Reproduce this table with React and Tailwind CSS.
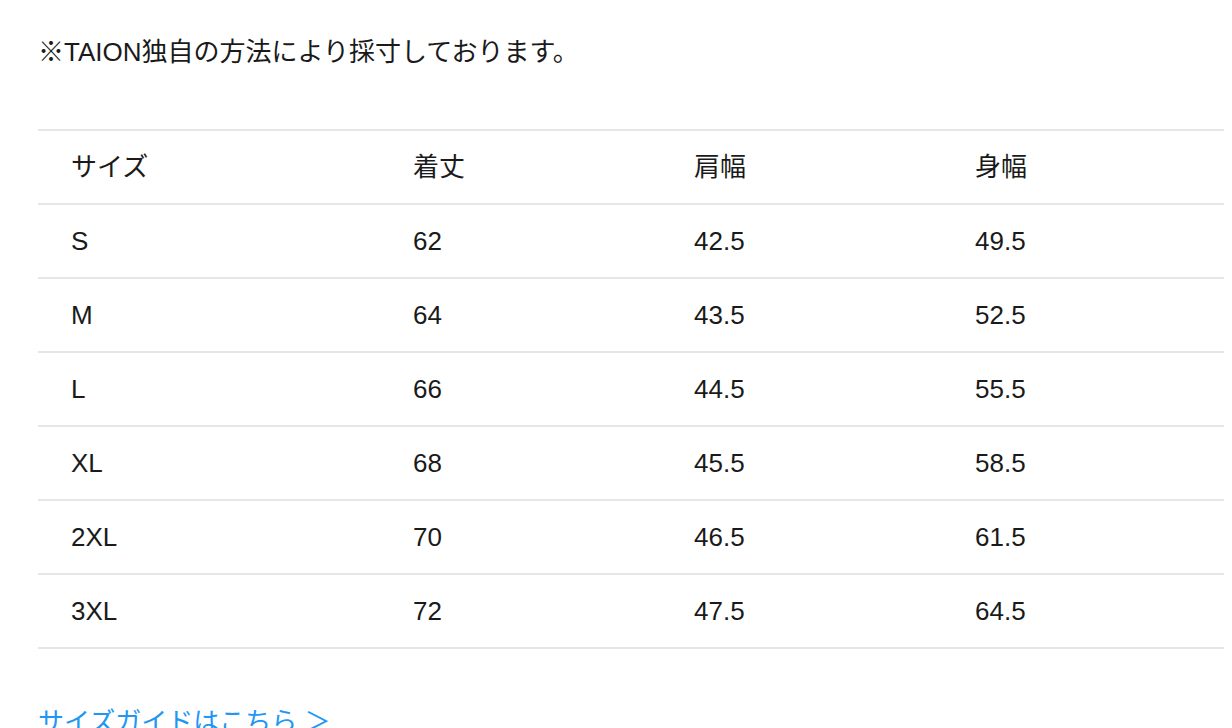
import React from "react";

const rows = [
  ["S", "62", "42.5", "49.5"],
  ["M", "64", "43.5", "52.5"],
  ["L", "66", "44.5", "55.5"],
  ["XL", "68", "45.5", "58.5"],
  ["2XL", "70", "46.5", "61.5"],
  ["3XL", "72", "47.5", "64.5"],
];

function Row({ cells }) {
  return (
    <div className="grid grid-cols-[342px_281px_281px_1fr] h-[74px] items-center border-t-2 border-[#e6e6e6]">
      {cells.map((c, i) => (
        <div key={i} className="pl-[33px]">{c}</div>
      ))}
    </div>
  );
}

export default function App() {
  return (
    <div
      className="w-[1232px] h-[728px] overflow-hidden bg-white text-[#1a1a1a] pl-[38px] pr-[8px] pt-[35px] text-[26px]"
      style={{ fontFamily: '"Liberation Sans", "Noto Sans CJK JP", sans-serif' }}
    >
      <div className="leading-[34px]">※TAION独自の方法により採寸しております。</div>
      <div className="mt-[60px] border-b-2 border-[#e6e6e6]">
        <Row cells={["サイズ", "着丈", "肩幅", "身幅"]} />
        {rows.map((r) => (
          <Row key={r[0]} cells={r} />
        ))}
      </div>
      <div className="mt-[56px] text-[#2196f3] leading-[34px]">サイズガイドはこちら ＞</div>
    </div>
  );
}
